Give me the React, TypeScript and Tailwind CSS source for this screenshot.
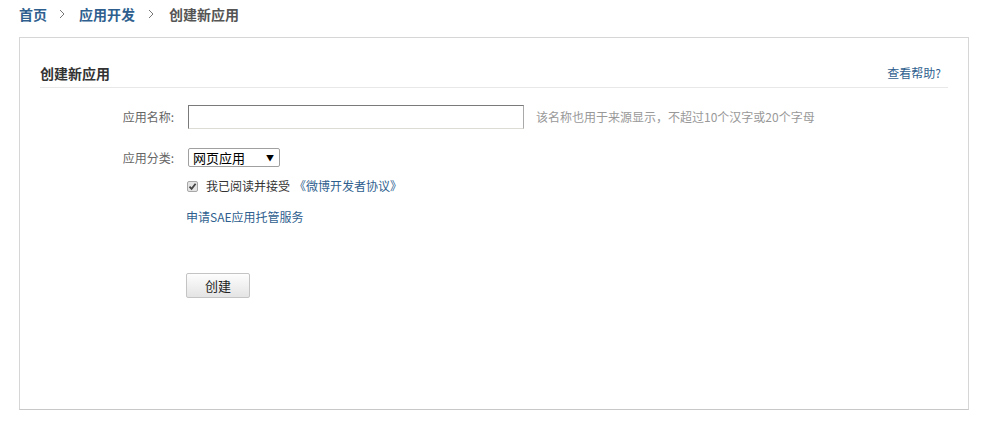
import React from "react";

const font = { fontFamily: '"Noto Sans CJK SC", "Liberation Sans", sans-serif' };

function Chevron() {
  return (
    <svg width="6" height="10" viewBox="0 0 6 10" className="mx-[13px]">
      <path d="M1 1 L5 5 L1 9" fill="none" stroke="#777" strokeWidth="1" />
    </svg>
  );
}

export default function App() {
  return (
    <div
      className="w-[1007px] h-[430px] bg-white text-[12px] leading-[18px] text-[#333]"
      style={font}
    >
      {/* breadcrumb */}
      <div className="h-[37px] pl-[19px] pt-[4px] flex items-start text-[14px] font-bold leading-[20px]">
        <a className="text-[#2f5f8f]">首页</a>
        <span className="h-[20px] flex items-center ml-[-1px]">
          <Chevron />
        </span>
        <a className="ml-[1px] text-[#2f5f8f]">应用开发</a>
        <span className="h-[20px] flex items-center">
          <Chevron />
        </span>
        <span className="ml-[2px] text-[#555]">创建新应用</span>
      </div>

      <div className="mx-[19px] w-[950px] h-[373px] border border-[#d6d6d6] border-b-[#c8c8c8] px-[20px]">
        <div className="mt-[21px] h-[27px] flex items-center justify-between border-b border-[#e8e8e8] pb-[1px] box-content">
          <h2 className="text-[14px] font-bold text-[#333]">创建新应用</h2>
          <a className="pr-[7px] text-[#2f5f8f]">查看帮助?</a>
        </div>

        <div className="flex items-center mt-[17px] h-[24px]">
          <label className="w-[134px] text-right text-[#666]">应用名称:</label>
          <input
            className="ml-[14px] w-[336px] h-[24px] border border-[#a9a9a9] border-t-[#7a7a7a] border-l-[#7a7a7a] border-b-[#dcdcd4] outline-none"
            type="text"
          />
          <span className="ml-[12px] text-[#999]">
            该名称也用于来源显示，不超过10个汉字或20个字母
          </span>
        </div>

        <div className="flex items-center mt-[19px] h-[19px]">
          <label className="w-[134px] text-right text-[#666]">应用分类:</label>
          <div className="ml-[14px] w-[92px] h-[19px] border border-[#a0a0a0] rounded-[2px] flex items-center justify-between pl-[4px] pr-[5px] text-[13px] leading-[17px] text-black">
            <span>网页应用</span>
            <span className="text-[8px] leading-[8px]">▼</span>
          </div>
        </div>

        <div className="flex items-center mt-[10px] ml-[147px] h-[18px]">
          <span className="w-[11px] h-[11px] border border-[#a8a8a8] bg-[#e4e4e4] rounded-[2px] flex items-center justify-center">
            <svg width="9" height="9" viewBox="0 0 9 9">
              <path d="M1.5 4.6 L3.6 6.8 L7.6 1.8" fill="none" stroke="#444" strokeWidth="1.8" />
            </svg>
          </span>
          <span className="ml-[8px] text-[#333]">我已阅读并接受</span>
          <a className="ml-[4px] text-[#2f5f8f]">《微博开发者协议》</a>
        </div>

        <div className="mt-[13px] ml-[146px] h-[18px]">
          <a className="text-[#2f5f8f]">申请SAE应用托管服务</a>
        </div>

        <div className="mt-[47px] ml-[146px]">
          <button className="w-[64px] h-[25px] border border-[#c4c4c4] rounded-[2px] bg-gradient-to-b from-[#fdfdfd] to-[#e4e4e4] text-[13px] leading-[18px] text-[#222]">
            创建
          </button>
        </div>
      </div>
    </div>
  );
}
